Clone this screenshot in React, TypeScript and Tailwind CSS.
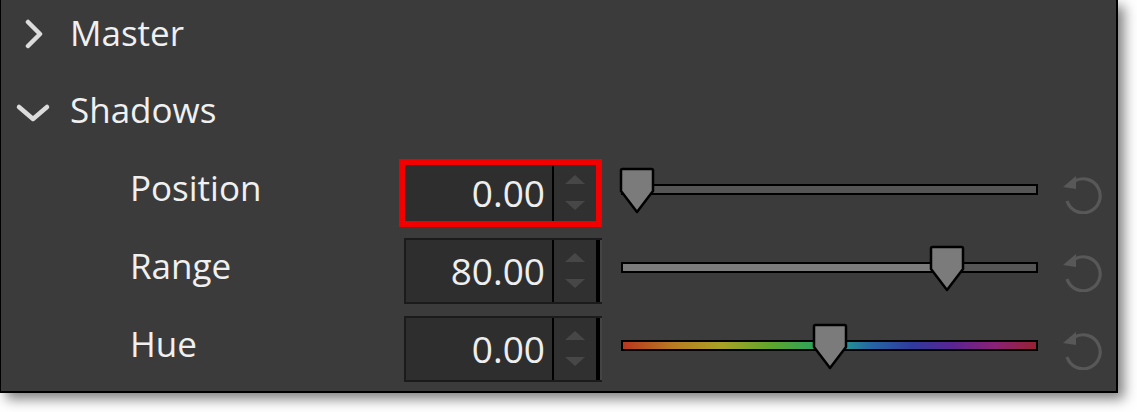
import React from 'react';

const font = { fontFamily: '"Open Sans", "Noto Sans", sans-serif' };

function ChevronRight() {
  return (
    <svg width="20" height="30" viewBox="0 0 20 30" className="ml-[23px]">
      <path d="M4 3 L16 15 L4 27" fill="none" stroke="#dcdcdc" strokeWidth="4.5" strokeLinecap="round" strokeLinejoin="round" />
    </svg>
  );
}

function ChevronDown() {
  return (
    <svg width="36" height="20" viewBox="0 0 36 20" className="ml-[14px] mt-[4px]">
      <path d="M4 4 L18 16 L32 4" fill="none" stroke="#dcdcdc" strokeWidth="4.5" strokeLinecap="round" strokeLinejoin="round" />
    </svg>
  );
}

function ResetIcon() {
  // circular arrow, arrow head at top-left pointing counter-clockwise
  return (
    <svg width="42" height="42" viewBox="0 0 42 42" className="ml-[23px]">
      <path d="M13 9.5 A17 17 0 1 1 6 29" fill="none" stroke="#585858" strokeWidth="3.2" />
      <path d="M15 4 L15 17 L2 15 Z" fill="#585858" />
    </svg>
  );
}

function Thumb({ left }: { left: number }) {
  return (
    <svg width="36" height="48" viewBox="0 0 36 48" className="absolute top-0" style={{ left }}>
      <path d="M2 3.5 Q2 2 3.5 2 H32.5 Q34 2 34 3.5 V24 L18 45 L2 24 Z" fill="#7b7b7b" stroke="#000" strokeWidth="2.5" strokeLinejoin="round" />
    </svg>
  );
}

function Slider({ value, hue }: { value: number; hue?: boolean }) {
  const thumbLeft = -2 + value * (417 - 32);
  return (
    <div className="relative ml-[19px] w-[417px] h-[48px] -mt-[3px]">
      <div className="absolute left-0 right-0 top-[17px] h-[11px] border-2 border-black bg-[#555555] overflow-hidden">
        {hue ? (
          <div className="h-full w-full bg-[linear-gradient(to_right,#b8361f_0%,#b87a22_12%,#a8a326_24%,#5ea52c_36%,#2fa35a_46%,#23a08e_52%,#2566a3_60%,#2f3a9e_70%,#5a2492_80%,#8a2176_90%,#952232_100%)]" />
        ) : (
          <div className="h-full bg-[#7b7b7b]" style={{ width: thumbLeft + 18 }} />
        )}
      </div>
      <Thumb left={thumbLeft} />
    </div>
  );
}

function NumberBox({ value, active }: { value: string; active?: boolean }) {
  const inner = (
    <div className="flex h-full">
      <div className="flex-1 flex items-center justify-end pr-[7px] text-[37px] text-[#eeeeee]" style={font}>
        {value}
      </div>
      <div className="w-[2px] bg-black" />
      <div className="w-[42px] flex flex-col items-center justify-center gap-[17px] bg-[#303030]">
        <svg width="20" height="9" viewBox="0 0 20 9">
          <path d="M0 9 L10 0 L20 9 Z" fill="#474747" />
        </svg>
        <svg width="20" height="9" viewBox="0 0 20 9">
          <path d="M0 0 L20 0 L10 9 Z" fill="#474747" />
        </svg>
      </div>
      {!active && <div className="w-[4px] bg-black" />}
      {!active && <div className="w-[2px] bg-[#444444]" />}
    </div>
  );
  if (active) {
    return (
      <div className="w-[203px] h-[68px] border-[6px] border-[#f20000] bg-[#2e2e2e]">{inner}</div>
    );
  }
  return (
    <div className="ml-[5px] w-[198px] h-[66px] border-2 border-[#1b1b1b] border-r-0 bg-[#2e2e2e]">{inner}</div>
  );
}

function ParamRow({ label, value, frac, active, hue }: { label: string; value: string; frac: number; active?: boolean; hue?: boolean }) {
  return (
    <div className="flex h-[78px] items-center">
      <div className="w-[398px] pl-[129px] text-[35px] text-[#f0f0f0]" style={font}>
        {label}
      </div>
      <div className="flex items-center mt-[9px]">
        <div className="w-[203px] flex items-center">
          <NumberBox value={value} active={active} />
        </div>
        <Slider value={frac} hue={hue} />
        <ResetIcon />
      </div>
    </div>
  );
}

export default function App() {
  return (
    <div className="w-[1137px] h-[412px] bg-white">
      <div className="w-[1118px] h-[393px] bg-[#3b3b3b] border-l border-r-2 border-b-2 border-black shadow-[6px_6px_12px_rgba(0,0,0,0.5)] overflow-hidden">
        <div className="-mt-[5px]">
          <div className="flex h-[77px] items-center">
            <div className="w-[69px] flex items-center">
              <ChevronRight />
            </div>
            <span className="text-[35px] text-[#f0f0f0]" style={font}>Master</span>
          </div>
          <div className="flex h-[77px] items-center">
            <div className="w-[69px] flex items-center">
              <ChevronDown />
            </div>
            <span className="text-[35px] text-[#f0f0f0]" style={font}>Shadows</span>
          </div>
          <ParamRow label="Position" value="0.00" frac={0} active />
          <ParamRow label="Range" value="80.00" frac={0.805} />
          <ParamRow label="Hue" value="0.00" frac={0.5} hue />
        </div>
      </div>
    </div>
  );
}
